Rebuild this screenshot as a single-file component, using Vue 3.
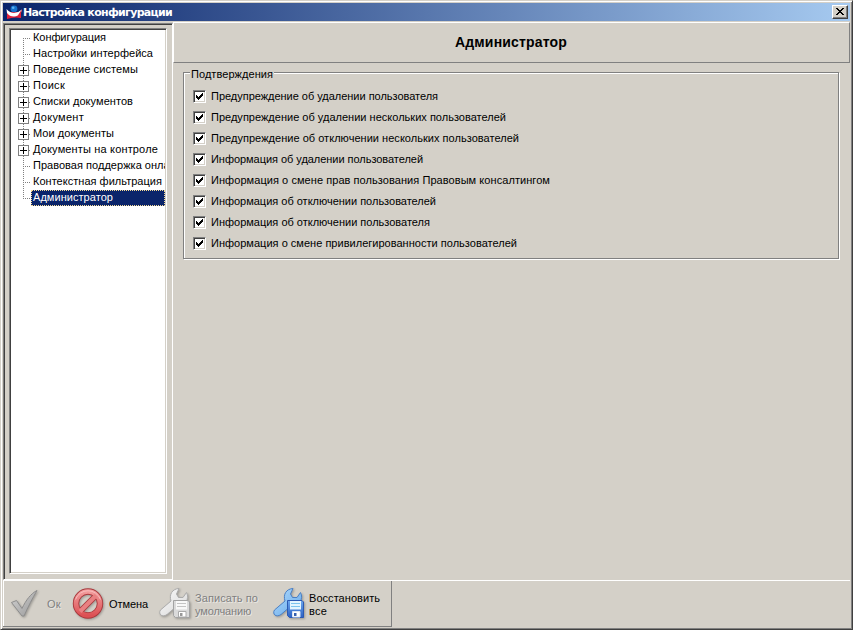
<script setup>
const tree = [
  { t: 'Конфигурация', w: 73 },
  { t: 'Настройки интерфейса', w: 120 },
  { t: 'Поведение системы', w: 105, plus: true },
  { t: 'Поиск', w: 32, plus: true },
  { t: 'Списки документов', w: 100, plus: true },
  { t: 'Документ', w: 51, plus: true },
  { t: 'Мои документы', w: 81, plus: true },
  { t: 'Документы на контроле', w: 125, plus: true },
  { t: 'Правовая поддержка онлайн', w: 149 },
  { t: 'Контекстная фильтрация', w: 129 },
  { t: 'Администратор', w: 80, sel: true },
]
const checks = [
  { t: 'Предупреждение об удалении пользователя', w: 227 },
  { t: 'Предупреждение об удалении нескольких пользователей', w: 295 },
  { t: 'Предупреждение об отключении нескольких пользователей', w: 308 },
  { t: 'Информация об удалении пользователей', w: 212 },
  { t: 'Информация о смене прав пользования Правовым консалтингом', w: 339 },
  { t: 'Информация об отключении пользователей', w: 225 },
  { t: 'Информация об отключении пользователя', w: 219 },
  { t: 'Информация о смене привилегированности пользователей', w: 306 },
]
// Spreads the letters so that a label takes exactly the given width.
const vFit = {
  mounted(el, { value }) {
    const natural = el.getBoundingClientRect().width
    el.style.letterSpacing = (value - natural) / el.textContent.length + 'px'
  },
}
</script>

<template>
  <div class="window">
    <header class="title">
      <svg class="logo" width="18" height="16" viewBox="0 0 18 16">
        <path d="M2 8 16 8 16 14Q9 12.500 2 15Z" fill="#e0223c" />
        <path d="M1.500 5Q5 9 9 9 13 9 17 5.500L16 8.500Q13 12.500 9 12.500 4.500 12.500 2 9Z" fill="#fff" />
        <path d="M17 5 16 9V14L13.500 13.200V10.500Z" fill="#e0223c" />
        <circle cx="9" cy="4.800" r="3.400" fill="#1672cc" />
        <circle cx="8.200" cy="3.800" r="1.300" fill="#5fb2f0" />
      </svg>
      <b v-fit="149">Настройка конфигурации</b>
      <button class="close" aria-label="Закрыть">
        <svg width="8" height="7" viewBox="0 0 8 7" shape-rendering="crispEdges">
          <path d="M0 0h2v1h1v1h2V1h1V0h2v1H7v1H6v1H5v1h1v1h1v1h1v1H6V6H5V5H3v1H2v1H0V6h1V5h1V4h1V3H2V2H1V1H0z" />
        </svg>
      </button>
    </header>
    <div class="body">
      <aside class="side">
        <ul class="tree">
          <li v-for="(n, i) in tree" :key="n.t" :class="{ first: i === 0, last: n.sel }">
            <span class="branch"><i v-if="n.plus" class="plus"></i></span>
            <span class="label" :class="{ sel: n.sel }"><span v-fit="n.w">{{ n.t }}</span></span>
          </li>
        </ul>
      </aside>
      <main class="main">
        <h1><span v-fit="112">Администратор</span></h1>
        <section class="group">
          <div class="legend"><span v-fit="82">Подтверждения</span></div>
          <div class="frame">
            <label v-for="c in checks" :key="c.t">
              <span class="box">
                <svg width="7" height="7" viewBox="0 0 7 7" shape-rendering="crispEdges">
                  <path d="M0 2h1v1h1v1h1V3h1V2h1V1h1V0h1v3H6v1H5v1H4v1H3v1H2V6H1V5H0z" />
                </svg>
              </span>
              <span class="cap" v-fit="c.w">{{ c.t }}</span>
            </label>
          </div>
        </section>
      </main>
    </div>
    <footer class="bottom">
      <div class="bar">
        <svg width="0" height="0" class="defs">
          <defs>
            <linearGradient id="gray" x1="0" y1="0" x2="1" y2="1"><stop stop-color="#d4d4d4" /><stop offset="1" stop-color="#989898" /></linearGradient>
            <linearGradient id="red" x1="0" y1="0" x2="0" y2="1"><stop stop-color="#f29c9c" /><stop offset="1" stop-color="#dc5054" /></linearGradient>
            <linearGradient id="pale" x1="0" y1="0" x2="1" y2="1"><stop stop-color="#fafafa" /><stop offset="1" stop-color="#d8d8d8" /></linearGradient>
            <linearGradient id="blue" x1="0" y1="0" x2="1" y2="1"><stop stop-color="#b4dcfb" /><stop offset="1" stop-color="#62a6ea" /></linearGradient>
            <linearGradient id="disk" x1="0" y1="0" x2="0" y2="1"><stop stop-color="#6ba6ee" /><stop offset="1" stop-color="#2d62c4" /></linearGradient>
          </defs>
        </svg>
        <svg class="ic ic-ok" width="32" height="32" viewBox="0 0 32 32">
          <path d="M1.500 14.500 6.500 12.500 12 20.500C16 12 21 5.500 27 2.500 22.500 10 18 19 14 28H12Z" fill="url(#gray)" stroke="#8d8d8d" stroke-linejoin="round" />
        </svg>
        <span class="txt off t-ok"><span v-fit="14">Ок</span></span>
        <svg class="ic ic-no" width="32" height="32" viewBox="0 0 32 32">
          <circle cx="16" cy="15.500" r="12" fill="none" stroke="#a8383c" stroke-width="6.400" />
          <path d="M8.500 23 23.500 8" stroke="#a8383c" stroke-width="6" />
          <circle cx="16" cy="15.500" r="12" fill="none" stroke="url(#red)" stroke-width="4.600" />
          <path d="M8 23.500 24 7.500" stroke="#e98082" stroke-width="4.200" />
          <path d="M3.500 11.500A13.300 13.300 0 0 1 28.500 11.500" fill="none" stroke="#f8bcbc" />
        </svg>
        <span class="txt t-no"><span v-fit="39">Отмена</span></span>
        <svg class="ic ic-def" width="32" height="32" viewBox="0 0 32 32">
          <path d="M1.500 22 12 13C10 6.500 13 1 20 .5L17.500 6 19.500 9.500 24 9.500 27.500 4.500C31 11 26 18 18 18L8 26.500C3 30-1 26 1.500 22Z" fill="url(#pale)" stroke="#ababab" stroke-linejoin="round" />
          <path d="M14.500 12.500H29L30.500 14V29.500H16.500L14.500 27.500Z" fill="#dadada" stroke="#a3a3a3" />
          <path d="M17 13h11v8.500H17z" fill="#f8f8f8" /><path d="M18 15.500h9M18 18.500h9" stroke="#c4c4c4" />
          <path d="M19.500 23.500h7.500v5.500h-7.500z" fill="#fff" stroke="#aaa" /><path d="M21 25h2.500v3H21z" fill="#999" />
        </svg>
        <span class="txt off two t-def"><span v-fit="63">Записать по</span><br><span v-fit="56">умолчанию</span></span>
        <svg class="ic ic-all" width="32" height="32" viewBox="0 0 32 32">
          <path d="M1.500 22 12 13C10 6.500 13 1 20 .5L17.500 6 19.500 9.500 24 9.500 27.500 4.500C31 11 26 18 18 18L8 26.500C3 30-1 26 1.500 22Z" fill="url(#blue)" stroke="#4a7fc4" stroke-linejoin="round" />
          <path d="M14.500 12.500H29L30.500 14V29.500H16.500L14.500 27.500Z" fill="url(#disk)" stroke="#2b59b2" />
          <path d="M17 13h11v8.500H17z" fill="#e4f5ff" /><path d="M18 15.500h9M18 18.500h9" stroke="#7cc4ee" />
          <path d="M19.500 23.500h7.500v5.500h-7.500z" fill="#fff" stroke="#dbe5f5" /><path d="M21 25h2.500v3H21z" fill="#345fae" />
        </svg>
        <span class="txt two t-all"><span v-fit="71">Восстановить</span><br><span v-fit="18">все</span></span>
      </div>
    </footer>
  </div>
</template>

<style>
body { margin: 0; background: #d4d0c8; }
</style>
<style scoped>
* { box-sizing: border-box; }
.window {
  width: 853px; height: 630px; padding: 2px; display: flex; flex-direction: column;
  background: #d4d0c8; color: #000; font: 11px/16px "Liberation Sans", Arial, sans-serif; white-space: nowrap;
  border: 1px solid; border-color: #d4d0c8 #404040 #404040 #d4d0c8;
  box-shadow: inset 1px 1px #fff, inset -1px -1px #808080;
}
.title {
  height: 18px; flex: none; display: flex; align-items: center; padding: 0 2px;
  background: linear-gradient(90deg, #0a246a, #a6caf0); color: #fff;
}
.title b { font: bold 11px/18px "DejaVu Sans", Verdana, sans-serif; padding-top: 1px; }
.close {
  margin-left: auto; width: 16px; height: 14px; padding: 0 1px 1px 0; display: flex; align-items: center; justify-content: center;
  background: #d4d0c8; border: 1px solid; border-color: #fff #404040 #404040 #fff; box-shadow: inset -1px -1px #808080;
}
.body { height: 558px; display: flex; flex: none; margin-top: 1px; }
.side {
  width: 170px; margin-top: 1px; padding: 4px 4px 4px 5px; border: 1px solid; border-color: #808080 #fff #fff #808080;
  box-shadow: inset 1px 1px #404040;
}
.tree {
  margin: 0; padding: 1px 0 0 1px; list-style: none; height: 546px; width: 158px; overflow: hidden;
  background: #fff; border: 1px solid; border-color: #808080 #fff #fff #808080;
  box-shadow: inset 1px 1px #404040, inset -1px -1px #d4d0c8;
}
.tree li { display: flex; height: 16px; width: 154px; }
.branch {
  width: 20px; flex: none; display: flex; align-items: center; padding-left: 7px;
  background:
    repeating-linear-gradient(180deg, #808080 0 1px, transparent 1px 2px) 12px 0 / 1px 16px no-repeat,
    repeating-linear-gradient(90deg, #808080 0 1px, transparent 1px 2px) 12px 8px / 8px 1px no-repeat;
}
.first .branch { background-position: 12px 8px, 12px 8px; }
.last .branch { background-size: 1px 8px, 8px 1px; }
.plus {
  width: 11px; height: 11px; margin-top: 1px; border: 1px solid #808080;
  background: linear-gradient(#000, #000) center / 7px 1px no-repeat, linear-gradient(#000, #000) center / 1px 7px no-repeat, #fff;
}
.label { flex: 1; min-width: 0; overflow: hidden; padding-left: 2px; line-height: 15px; }
.sel { background: #0a246a; color: #fff; padding-left: 1px; line-height: 13px; border: 1px dotted #f5db95; }
.main { flex: 1; }
h1 {
  margin: 0; height: 41px; width: 677px; font: bold 14px/39px "Liberation Sans", Arial, sans-serif; text-align: center;
  padding-right: 1px; border: 1px solid; border-color: #fff #808080 #808080 #fff;
}
.group { padding: 2px 11px 0 10px; }
.legend { height: 16px; margin-left: 7px; width: 84px; padding: 1px 0 0 1px; background: #d4d0c8; position: relative; z-index: 1; }
.frame {
  margin-top: -9px; height: 187px; width: 656px; padding: 13px 0 0 9px; border: 1px solid #808080;
  box-shadow: inset 1px 1px #fff, 1px 1px #fff;
}
label { display: flex; align-items: center; height: 21px; gap: 5px; }
.cap { padding-bottom: 2px; }
.box {
  width: 13px; height: 13px; background: #fff; border: 1px solid; border-color: #808080 #fff #fff #808080;
  box-shadow: inset 1px 1px #404040, inset -1px -1px #d4d0c8; display: flex; align-items: center; justify-content: center;
}
.bottom { height: 47px; border-top: 1px solid #fff; width: 847px; }
.bar { width: 389px; height: 46px; display: flex; align-items: center; border: solid #808080; border-width: 0 1px 1px 0; box-shadow: inset 1px 0 #fff; }
.defs { position: absolute; }
.ic { flex: none; filter: drop-shadow(1px 1px 1px #0004); }
.ic-ok { margin-left: 7px; }
.txt { flex: none; line-height: 13px; padding-top: 1px; }
.two { padding-top: 2px; }
.off { color: #808080; text-shadow: 1px 1px #fff8; }
.t-ok { width: 15px; margin-left: 5px; }
.ic-no { margin-left: 10px; }
.t-no { width: 39px; margin-left: 5px; }
.ic-def { margin-left: 11px; }
.t-def { width: 64px; margin-left: 4px; }
.ic-all { margin-left: 14px; }
.t-all { margin-left: 4px; }
</style>
